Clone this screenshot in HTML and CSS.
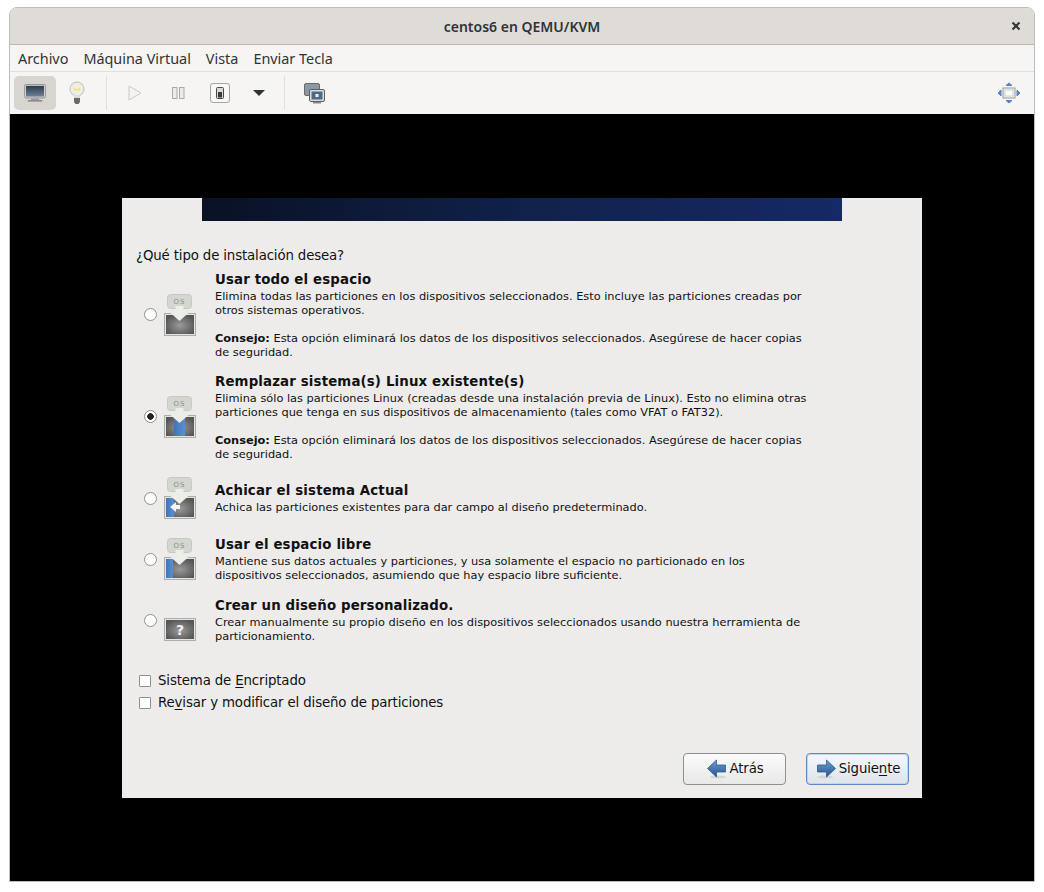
FILE: index.html
```html
<!DOCTYPE html>
<html lang="en">

<head>
    <meta charset="utf-8">
    <title>centos6 en QEMU/KVM</title>
    <link rel="stylesheet" href="styles.css">
</head>

<body>
    <svg class="defs" width="0" height="0">
        <defs>
            <radialGradient id="screen-gray" cx="50%" cy="55%" r="60%">
                <stop offset="0" stop-color="#9a9a9a"/>
                <stop offset="1" stop-color="#555"/>
            </radialGradient>
            <linearGradient id="band-blue" x1="0" y1="0" x2="1" y2="0">
                <stop offset="0" stop-color="#3f74b8"/>
                <stop offset="1" stop-color="#5b90cf"/>
            </linearGradient>
            <linearGradient id="arrow-blue" x1="0" y1="0" x2="0" y2="1">
                <stop offset="0" stop-color="#6f9bd0"/>
                <stop offset="1" stop-color="#25558f"/>
            </linearGradient>
            <linearGradient id="monitor-glass" x1="0" y1="0" x2="0" y2="1">
                <stop offset="0" stop-color="#2c3b4d"/>
                <stop offset="1" stop-color="#6d8198"/>
            </linearGradient>
            <symbol id="os-box" viewBox="0 0 33 24">
                <rect x="4.500" y="0.500" width="24" height="14" rx="3" fill="#d4d7d0" stroke="#c6c8c2"/>
                <text x="16.500" y="9.500" class="os-label">OS</text>
            </symbol>
            <symbol id="os-arrow" viewBox="0 0 33 42">
                <path d="M12.500 12h8v7h5l-9 8-9-8h5z" fill="#eceee8"/>
            </symbol>
        </defs>
    </svg>

    <div class="window">
        <header class="titlebar">
            <span class="title">centos6 en QEMU/KVM</span>
            <svg class="close" width="10" height="10" viewBox="0 0 10 10">
                <path d="M1.500 1.500l7 7M8.500 1.500l-7 7" stroke="#2e3436" stroke-width="2"/>
            </svg>
        </header>

        <nav class="menubar">
            <span>Archivo</span>
            <span>Máquina Virtual</span>
            <span>Vista</span>
            <span>Enviar Tecla</span>
        </nav>

        <div class="toolbar">
            <button class="tool tool-active">
                <svg width="22" height="18" viewBox="0 0 24 20">
                    <rect x="0.500" y="0.500" width="23" height="15" rx="1.500" fill="#dcdcdc" stroke="#8a8a8a"/>
                    <rect x="2" y="2" width="20" height="12" fill="url(#monitor-glass)"/>
                    <path d="M8 16h8l1 2H7z" fill="#9a9a9a"/>
                    <rect x="4" y="18" width="16" height="1.500" fill="#7d7d7d"/>
                </svg>
            </button>
            <button class="tool">
                <svg width="18" height="24" viewBox="0 0 18 24">
                    <circle cx="9" cy="8" r="7" fill="#eeeee2" stroke="#bdbdb6"/>
                    <path d="M5.500 6.500l3.500 2 3.500-2-1 3h-5z" fill="#f2e65c"/>
                    <path d="M6 14h6v3H6z" fill="#dededa"/>
                    <path d="M6 17h6v4l-1.500 2h-3L6 21z" fill="#6a6a68"/>
                </svg>
            </button>
            <i class="sep"></i>
            <button class="tool tool-play">
                <svg width="14" height="16" viewBox="0 0 14 16">
                    <path d="M1 1l12 7-12 7z" fill="#f4f3f1" stroke="#c9c9c6"/>
                </svg>
            </button>
            <button class="tool tool-pause">
                <svg width="13" height="12" viewBox="0 0 13 12">
                    <rect x="0.500" y="0.500" width="4.500" height="11" fill="#ebebe9" stroke="#a9a9a7"/>
                    <rect x="7.500" y="0.500" width="4.500" height="11" fill="#ebebe9" stroke="#a9a9a7"/>
                </svg>
            </button>
            <button class="tool tool-power">
                <svg width="20" height="20" viewBox="0 0 20 20">
                    <rect x="0.500" y="0.500" width="19" height="19" rx="2.500" fill="#f8f8f7" stroke="#a5a5a3"/>
                    <rect x="6.500" y="4.500" width="7" height="11" rx="1" fill="#d9d9d7" stroke="#4a4a4a"/>
                    <rect x="8" y="9" width="4" height="5.500" fill="#3b3b3b"/>
                </svg>
            </button>
            <button class="tool tool-caret">
                <svg width="12" height="6" viewBox="0 0 12 6">
                    <path d="M0 0h12L6 6z" fill="#2e3436"/>
                </svg>
            </button>
            <i class="sep sep-second"></i>
            <button class="tool tool-screens">
                <svg width="21" height="21" viewBox="0 0 21 21">
                    <rect x="0.500" y="0.500" width="15" height="12" rx="1.500" fill="#8b98a5" stroke="#6a6a6a"/>
                    <rect x="5.500" y="6.500" width="15" height="12" rx="1.500" fill="#d9dde0" stroke="#5e5e5e"/>
                    <rect x="7.500" y="8.500" width="11" height="8" fill="#4f6a84"/>
                    <path d="M11.500 11h3v3h-3z" fill="#eef1f3"/>
                    <rect x="9" y="19" width="8" height="1.500" fill="#8a8a8a"/>
                </svg>
            </button>
            <button class="tool tool-fullscreen">
                <svg width="24" height="22" viewBox="0 0 24 22">
                    <rect x="6" y="6" width="12" height="10" fill="#f1f1f0" stroke="#9a9a98"/>
                    <rect x="8" y="8" width="8" height="6" fill="#fbfbfb" stroke="#cfcfcd"/>
                    <path d="M12 1l3 2.500H9zM12 21l-3-2.500h6zM1 11l3-3v6zM23 11l-3 3V8z" fill="#5a84bf" stroke="#5a84bf" stroke-linejoin="round"/>
                </svg>
            </button>
        </div>

        <main class="console">
            <section class="guest">
                <div class="banner"></div>
                <p class="question">¿Qué tipo de instalación desea?</p>

                <div class="options">
                    <div class="option">
                        <span class="radio"></span>
                        <svg class="opt-icon" viewBox="0 0 33 42">
                            <use href="#os-box" width="33" height="24"/>
                            <rect x="1.500" y="19.500" width="31" height="22" fill="#e4e4e2" stroke="#adadab"/>
                            <rect x="3" y="21" width="28" height="19" fill="url(#screen-gray)"/>
                            <use href="#os-arrow" width="33" height="42"/>
                        </svg>
                        <div class="opt-text">
                            <h3>Usar todo el espacio</h3>
                            <p>Elimina todas las particiones en los dispositivos seleccionados. Esto incluye las particiones creadas por<br>otros sistemas operativos.</p>
                            <p class="tip"><b>Consejo:</b> Esta opción eliminará los datos de los dispositivos seleccionados. Asegúrese de hacer copias<br>de seguridad.</p>
                        </div>
                    </div>

                    <div class="option">
                        <span class="radio radio-on"></span>
                        <svg class="opt-icon" viewBox="0 0 33 42">
                            <use href="#os-box" width="33" height="24"/>
                            <rect x="1.500" y="19.500" width="31" height="22" fill="#e4e4e2" stroke="#adadab"/>
                            <rect x="3" y="21" width="28" height="19" fill="url(#screen-gray)"/>
                            <rect x="11" y="21" width="11" height="19" fill="url(#band-blue)"/>
                            <use href="#os-arrow" width="33" height="42"/>
                        </svg>
                        <div class="opt-text">
                            <h3>Remplazar sistema(s) Linux existente(s)</h3>
                            <p>Elimina sólo las particiones Linux (creadas desde una instalación previa de Linux). Esto no elimina otras<br>particiones que tenga en sus dispositivos de almacenamiento (tales como VFAT o FAT32).</p>
                            <p class="tip"><b>Consejo:</b> Esta opción eliminará los datos de los dispositivos seleccionados. Asegúrese de hacer copias<br>de seguridad.</p>
                        </div>
                    </div>

                    <div class="option">
                        <span class="radio"></span>
                        <svg class="opt-icon" viewBox="0 0 33 42">
                            <use href="#os-box" width="33" height="24"/>
                            <rect x="1.500" y="19.500" width="31" height="22" fill="#e4e4e2" stroke="#adadab"/>
                            <rect x="3" y="21" width="28" height="19" fill="url(#screen-gray)"/>
                            <rect x="3" y="21" width="8" height="19" fill="url(#band-blue)"/>
                            <use href="#os-arrow" width="33" height="42"/>
                            <path d="M7 30l6-5v3h4v4h-4v3z" fill="#f4f4f2"/>
                        </svg>
                        <div class="opt-text">
                            <h3>Achicar el sistema Actual</h3>
                            <p>Achica las particiones existentes para dar campo al diseño predeterminado.</p>
                        </div>
                    </div>

                    <div class="option">
                        <span class="radio"></span>
                        <svg class="opt-icon" viewBox="0 0 33 42">
                            <use href="#os-box" width="33" height="24"/>
                            <rect x="1.500" y="19.500" width="31" height="22" fill="#e4e4e2" stroke="#adadab"/>
                            <rect x="3" y="21" width="28" height="19" fill="url(#screen-gray)"/>
                            <rect x="3" y="21" width="7" height="19" fill="url(#band-blue)"/>
                            <use href="#os-arrow" width="33" height="42"/>
                        </svg>
                        <div class="opt-text">
                            <h3>Usar el espacio libre</h3>
                            <p>Mantiene sus datos actuales y particiones, y usa solamente el espacio no particionado en los<br>dispositivos seleccionados, asumiendo que hay espacio libre suficiente.</p>
                        </div>
                    </div>

                    <div class="option">
                        <span class="radio"></span>
                        <svg class="opt-icon" viewBox="0 0 33 42">
                            <rect x="1.500" y="19.500" width="31" height="22" fill="#e4e4e2" stroke="#adadab"/>
                            <rect x="3" y="21" width="28" height="19" fill="url(#screen-gray)"/>
                            <text x="17" y="36" class="question-mark">?</text>
                        </svg>
                        <div class="opt-text">
                            <h3>Crear un diseño personalizado.</h3>
                            <p>Crear manualmente su propio diseño en los dispositivos seleccionados usando nuestra herramienta de<br>particionamiento.</p>
                        </div>
                    </div>
                </div>

                <div class="checks">
                    <label class="check"><span class="box"></span><span>Sistema de <u>E</u>ncriptado</span></label>
                    <label class="check"><span class="box"></span><span>Re<u>v</u>isar y modificar el diseño de particiones</span></label>
                </div>

                <div class="actions">
                    <button class="btn">
                        <svg width="20" height="20" viewBox="0 0 20 20">
                            <ellipse cx="11" cy="18" rx="8" ry="1.500" fill="#d4d4d2"/>
                            <path d="M0.500 9.500L9.500 1v5h9v7h-9v5z" fill="url(#arrow-blue)" stroke="#2c5a94" stroke-width="0.800"/>
                        </svg>
                        <span>Atrás</span>
                    </button>
                    <button class="btn btn-default">
                        <svg width="20" height="20" viewBox="0 0 20 20">
                            <ellipse cx="9" cy="18" rx="8" ry="1.500" fill="#d4d4d2"/>
                            <path d="M19.500 9.500L10.500 1v5h-9v7h9v5z" fill="url(#arrow-blue)" stroke="#2c5a94" stroke-width="0.800"/>
                        </svg>
                        <span>Siguie<u>n</u>te</span>
                    </button>
                </div>
            </section>
        </main>
    </div>
</body>

</html>
```

FILE: styles.css
```css
* {
    box-sizing: border-box;
}

body {
    margin: 0;
    height: 892px;
    padding: 7px 9px 10px;
    background-color: white;
    font-family: "Noto Sans", sans-serif;
    color: #2e3436;
}

.defs {
    position: absolute;
}

.window {
    display: flex;
    flex-direction: column;
    height: 875px;
    border: 1px solid #bdbcb9;
    border-radius: 8px 8px 0 0;
    overflow: hidden;
}

.titlebar {
    position: relative;
    flex: none;
    display: flex;
    align-items: center;
    justify-content: center;
    height: 37px;
    background-color: #dfdcd8;
    border-bottom: 1px solid #bfb8b1;
}

.title {
    font-size: 14px;
    font-weight: 600;
}

.close {
    position: absolute;
    right: 13px;
    top: 13px;
}

.menubar {
    flex: none;
    display: flex;
    align-items: center;
    gap: 15px;
    height: 27px;
    padding-left: 8px;
    background-color: #f6f5f4;
    border-bottom: 1px solid #e1dfdc;
    font-size: 14.4px;
}

.toolbar {
    flex: none;
    display: flex;
    align-items: center;
    height: 42px;
    padding-left: 4px;
    background-color: #f6f5f4;
}

.tool {
    display: flex;
    align-items: center;
    justify-content: center;
    width: 42px;
    height: 34px;
    padding: 0;
    border: none;
    border-radius: 5px;
    background: none;
}

.tool-active {
    background-color: #d8d4cf;
}

.sep {
    width: 1px;
    height: 34px;
    margin: 0 7px 0 8px;
    background-color: #e1dfdc;
}

.sep-second {
    margin: 0 8px 0 4px;
}

.tool-pause {
    margin-left: 1px;
}

.tool-caret {
    margin-left: -3px;
}

.tool-fullscreen {
    margin-left: auto;
    margin-right: 4px;
}

.console {
    flex: 1;
    display: flex;
    align-items: center;
    justify-content: center;
    background-color: black;
}

.guest {
    display: flex;
    flex-direction: column;
    width: 800px;
    height: 600px;
    background-color: #edeceb;
    font-family: "DejaVu Sans", sans-serif;
    color: #111;
}

.banner {
    flex: none;
    width: 640px;
    height: 23px;
    margin: 0 auto;
    background: linear-gradient(90deg, #0a1125, #10214a 50%, #152a66);
}

.question {
    margin: 27px 0 0 14px;
    font-size: 13.33px;
    line-height: 16px;
    letter-spacing: -0.14px;
}

.options {
    display: flex;
    flex-direction: column;
    gap: 14px;
    margin: 7px 0 0 22px;
}

.option {
    display: flex;
    align-items: center;
    min-height: 47px;
}

.radio {
    flex: none;
    width: 13px;
    height: 13px;
    border: 1px solid #8f8f8d;
    border-radius: 50%;
    background-color: white;
}

.radio-on {
    background: radial-gradient(circle, #222 0 3px, white 3.500px);
}

.opt-icon {
    flex: none;
    width: 33px;
    height: 42px;
    margin: 0 19px 0 6px;
}

.os-label {
    font-family: "DejaVu Sans", sans-serif;
    font-size: 7px;
    letter-spacing: 1px;
    fill: #8d908a;
    text-anchor: middle;
}

.question-mark {
    font-family: "DejaVu Sans", sans-serif;
    font-size: 14px;
    font-weight: bold;
    fill: #f2f2f2;
    text-anchor: middle;
}

.opt-text {
    white-space: nowrap;
}

.opt-text h3 {
    margin: 0;
    font-size: 13.33px;
    line-height: 18px;
    font-weight: bold;
    letter-spacing: 0.15px;
}

.opt-text p {
    margin: 0;
    font-size: 11.35px;
    line-height: 14px;
}

.opt-text .tip {
    margin-top: 14px;
}

.checks {
    display: flex;
    flex-direction: column;
    gap: 6px;
    margin: 29px 0 0 17px;
}

.check {
    display: flex;
    align-items: center;
    gap: 8px;
    font-size: 13.33px;
    line-height: 16px;
    letter-spacing: -0.14px;
}

.check u,
.btn u {
    text-underline-offset: 2px;
}

.box {
    flex: none;
    width: 12px;
    height: 12px;
    margin-right: -1px;
    border: 1px solid #8f8f8d;
    border-radius: 1px;
    background-color: white;
}

.actions {
    display: flex;
    justify-content: flex-end;
    gap: 20px;
    margin-top: auto;
    padding: 0 13px 13px 0;
}

.btn {
    display: flex;
    align-items: center;
    justify-content: center;
    gap: 3px;
    width: 103px;
    height: 32px;
    padding: 0 0 0 1px;
    border: 1px solid #8f8f8d;
    border-radius: 4px;
    background: linear-gradient(#fbfbfb, #e8e8e7);
    font-family: "DejaVu Sans", sans-serif;
    font-size: 13.33px;
    letter-spacing: -0.14px;
    color: #111;
}

.btn-default {
    border-color: #5d8ac0;
    box-shadow: inset 0 0 0 1px #c4d4e6;
    background: linear-gradient(#f4f7fa, #dfe4ea);
}
```
